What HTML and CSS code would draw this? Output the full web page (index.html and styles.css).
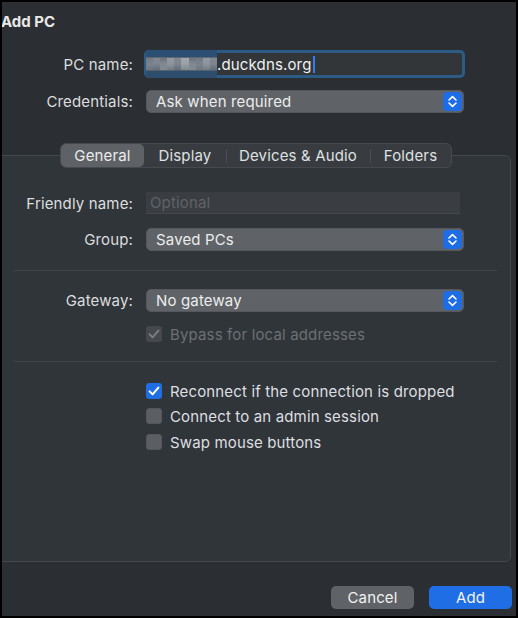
FILE: index.html
```html
<!DOCTYPE html>
<html>
<head>
<meta charset="utf-8">
<link rel="stylesheet" href="styles.css">
</head>
<body>
<div class="window">
  <div class="title">Add PC</div>

  <div class="form top-form">
    <label class="lbl">PC name:</label>
    <div class="textfield focused">
      <div class="mosaic">
        <span class="m1"></span><span class="m2"></span><span class="m3"></span><span class="m4"></span><span class="m2"></span><span class="m5"></span><span class="m3"></span><span class="m1"></span><span class="m4"></span><span class="m2"></span>
      </div>
      <span class="value">.duckdns.org</span><span class="caret"></span>
    </div>

    <label class="lbl">Credentials:</label>
    <div class="popup">
      <span>Ask when required</span>
      <span class="stepper"><svg width="19" height="19" viewBox="0 0 19 19"><path d="M6 8 L9.5 4.6 L13 8" /><path d="M6 11 L9.5 14.4 L13 11" /></svg></span>
    </div>
  </div>

  <div class="box">
    <div class="tabs">
      <div class="tab tab-general selected">General</div>
      <div class="tab tab-display">Display</div>
      <div class="tab tab-devices">Devices &amp; Audio</div>
      <div class="tab tab-folders">Folders</div>
    </div>

    <div class="form row-friendly">
      <label class="lbl">Friendly name:</label>
      <div class="plainfield"><span class="placeholder">Optional</span></div>
    </div>

    <div class="form row-group">
      <label class="lbl">Group:</label>
      <div class="popup">
        <span>Saved PCs</span>
        <span class="stepper"><svg width="19" height="19" viewBox="0 0 19 19"><path d="M6 8 L9.5 4.6 L13 8" /><path d="M6 11 L9.5 14.4 L13 11" /></svg></span>
      </div>
    </div>

    <div class="sep sep-1"></div>

    <div class="form row-gateway">
      <label class="lbl">Gateway:</label>
      <div class="popup">
        <span>No gateway</span>
        <span class="stepper"><svg width="19" height="19" viewBox="0 0 19 19"><path d="M6 8 L9.5 4.6 L13 8" /><path d="M6 11 L9.5 14.4 L13 11" /></svg></span>
      </div>
    </div>

    <div class="check disabled row-bypass">
      <span class="cb cb-disabled"><svg width="16" height="16" viewBox="0 0 16 16"><path d="M3.6 8.4 L6.6 11.4 L12.4 4.6" /></svg></span>
      <span class="ctext">Bypass for local addresses</span>
    </div>

    <div class="sep sep-2"></div>

    <div class="check row-reconnect">
      <span class="cb cb-on"><svg width="16" height="16" viewBox="0 0 16 16"><path d="M3.6 8.4 L6.6 11.4 L12.4 4.6" /></svg></span>
      <span class="ctext">Reconnect if the connection is dropped</span>
    </div>
    <div class="check row-admin">
      <span class="cb cb-off"></span>
      <span class="ctext">Connect to an admin session</span>
    </div>
    <div class="check row-swap">
      <span class="cb cb-off"></span>
      <span class="ctext">Swap mouse buttons</span>
    </div>
  </div>

  <div class="buttons">
    <div class="btn btn-cancel">Cancel</div>
    <div class="btn btn-add">Add</div>
  </div>
</div>
</body>
</html>
```

FILE: styles.css
```css
html, body {
  margin: 0;
  padding: 0;
}
body {
  background: #000;
  padding: 2px;
  width: 514px;
  height: 614px;
  font-family: "Inter", "Liberation Sans", sans-serif;
  font-size: 15px;
  letter-spacing: 0.15px;
  color: #dedfe0;
}
.window {
  width: 514px;
  height: 614px;
  background: #2b2f33;
  overflow: hidden;
  display: flex;
  flex-direction: column;
}
.title {
  margin-top: 11px;
  margin-left: -1px;
  line-height: 18px;
  font-weight: 700;
  font-size: 15px;
  color: #e8e8e8;
  letter-spacing: 0;
}
.form {
  display: grid;
  grid-template-columns: 131px 318px;
  column-gap: 13px;
  align-items: center;
}
.top-form {
  margin-top: 19px;
  row-gap: 12px;
}
.lbl {
  text-align: right;
  color: #dcdddf;
  white-space: nowrap;
}
.textfield {
  margin-left: -2px;
  width: 321px;
  height: 28px;
  box-sizing: border-box;
  border: 3px solid #2c5b86;
  border-radius: 5px;
  background: #323639;
  display: flex;
  align-items: center;
  color: #eeeeee;
  position: relative;
}
.mosaic {
  width: 71px;
  height: 28px;
  margin-left: -1px;
  display: grid;
  grid-template-columns: repeat(10, 1fr);
  background: linear-gradient(#2a4f72 0, #2a4f72 7px, #5c6570 7px, #6e7681 14px, #55606b 21px, #2d4d6c 21px);
}
.mosaic span { display: block; height: 28px; }
.mosaic .m1 { background: linear-gradient(transparent 8px, rgba(150,155,165,0.35) 8px, rgba(150,155,165,0.35) 20px, transparent 20px); }
.mosaic .m2 { background: linear-gradient(transparent 8px, rgba(170,175,185,0.45) 8px, rgba(120,130,140,0.3) 20px, transparent 20px); }
.mosaic .m3 { background: linear-gradient(transparent 8px, rgba(140,145,155,0.25) 8px, rgba(190,195,200,0.4) 20px, transparent 20px); }
.mosaic .m4 { background: linear-gradient(transparent 8px, rgba(200,205,210,0.5) 8px, rgba(160,165,170,0.35) 20px, transparent 20px); }
.mosaic .m5 { background: linear-gradient(transparent 8px, rgba(220,222,225,0.55) 8px, rgba(180,185,190,0.4) 20px, transparent 20px); }
.value {
  margin-left: 0;
  color: #f0f0f0;
}
.caret {
  display: inline-block;
  width: 2px;
  height: 17px;
  margin-left: 1px;
  background: #2f7df2;
}
.popup {
  width: 318px;
  height: 23px;
  box-sizing: border-box;
  border-radius: 5px;
  background: #5f6367;
  border: 1px solid #55595d;
  display: flex;
  align-items: center;
  justify-content: space-between;
  padding-left: 9px;
  padding-right: 1px;
  color: #ececec;
}
.stepper {
  width: 19px;
  height: 19px;
  border-radius: 4px;
  background: #1e6de4;
  display: block;
}
.stepper svg { display: block; }
.stepper path {
  fill: none;
  stroke: #ffffff;
  stroke-width: 1.6;
  stroke-linecap: round;
  stroke-linejoin: round;
}
.box {
  margin-top: 42px;
  margin-left: -10px;
  width: 519px;
  height: 407px;
  box-sizing: border-box;
  border: 1px solid #43484c;
  border-radius: 6px;
  background: #30353a;
  padding-left: 9px;
  display: flex;
  flex-direction: column;
}
.tabs {
  margin-top: -13px;
  margin-left: 58px;
  width: 392px;
  height: 25px;
  box-sizing: border-box;
  border: 1px solid #464a4e;
  border-radius: 6px;
  background: #383c40;
  display: flex;
  align-items: center;
}
.tab {
  height: 23px;
  display: flex;
  align-items: center;
  justify-content: center;
  color: #dfe0e1;
  position: relative;
}
.tab.selected {
  background: #5e6266;
  border-radius: 5px;
  color: #ececec;
}
.tab-general { width: 83px; }
.tab-display { width: 82px; }
.tab-devices { width: 144px; }
.tab-folders { width: 81px; }
.tab-devices::before, .tab-folders::before {
  content: "";
  position: absolute;
  left: 0;
  top: 5px;
  width: 1px;
  height: 14px;
  background: #4b4f53;
}
.row-friendly { margin-top: 24px; }
.plainfield {
  width: 314px;
  height: 22px;
  box-sizing: border-box;
  background: #3a3e42;
  border-bottom: 1px solid #44484c;
  display: flex;
  align-items: center;
  padding-left: 4px;
}
.placeholder { color: #5f6367; }
.row-group { margin-top: 14px; }
.sep {
  margin-left: 12px;
  width: 483px;
  height: 1px;
  background: #40454a;
}
.sep-1 { margin-top: 19px; }
.row-gateway { margin-top: 18px; }
.check {
  display: flex;
  align-items: center;
  margin-left: 144px;
  height: 16px;
  color: #dedfe0;
}
.cb {
  width: 16px;
  height: 16px;
  box-sizing: border-box;
  border-radius: 3px;
  margin-right: 8px;
  display: block;
}
.cb svg { display: block; }
.cb path {
  fill: none;
  stroke-width: 2;
  stroke-linecap: round;
  stroke-linejoin: round;
}
.cb-on { background: #1f6ee4; }
.cb-on path { stroke: #ffffff; }
.cb-off { background: #5b5f63; border: 1px solid #53575b; }
.cb-disabled { background: #45494d; }
.cb-disabled path { stroke: #7b7e82; }
.check.disabled .ctext { color: #6c7074; }
.row-bypass { margin-top: 14px; }
.sep-2 { margin-top: 19px; }
.row-reconnect { margin-top: 21px; }
.row-admin { margin-top: 9px; }
.row-swap { margin-top: 10px; }
.buttons {
  margin-top: 24px;
  display: flex;
  justify-content: flex-end;
  gap: 15px;
  padding-right: 4px;
}
.btn {
  width: 83px;
  height: 23px;
  border-radius: 5px;
  display: flex;
  align-items: center;
  justify-content: center;
  color: #f2f2f2;
}
.btn-cancel { background: #5f6367; }
.btn-add { background: #1f6ee6; }
```
